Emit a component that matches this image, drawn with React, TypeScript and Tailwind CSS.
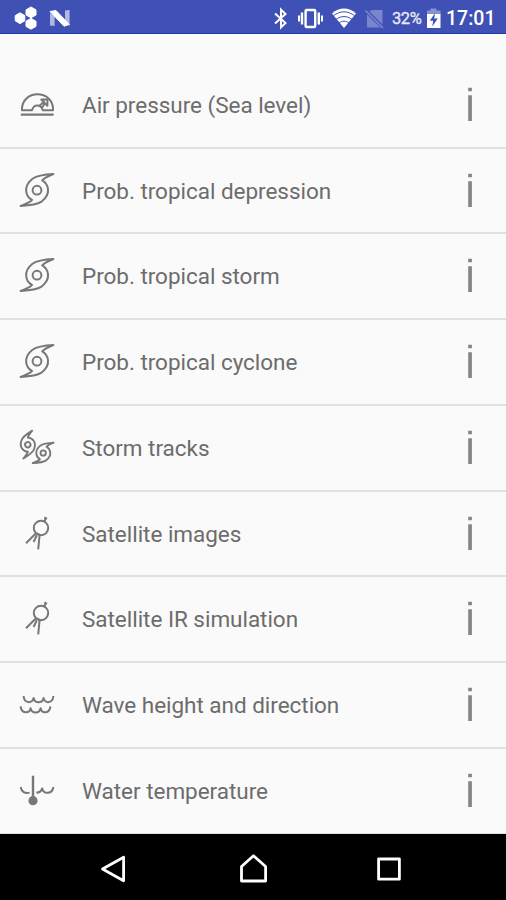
import React from 'react';

const CYCLONE =
  'M16.4 -16.2 C9 -15.8 1 -15.3 -4.5 -11.5 C-9 -8 -11.3 -4 -10.8 1 C-10.4 5 -8.4 8 -5 9.8 C-6 11.6 -9 12.6 -16.4 15.8 C-9 15.4 -1 15 4.5 11.5 C9 8 11.6 4 11 -1 C10.5 -5 8.6 -8 5.2 -9.8 C7 -12 11 -14 16.4 -16.2 Z';

type Kind = 'pressure' | 'cyclone' | 'tracks' | 'satellite' | 'waves' | 'water';

const drawings: Record<Kind, React.ReactNode> = {
  pressure: (
    <>
      <path d="M22 5.3 V3 C22.5 -5 29 -10.7 37.5 -10.7 S52.5 -5 53 3 V5.3 H42.8 C42 2.2 40 .4 37.2 .4 S32.8 2.2 32 5.3 Z" />
      <path d="M39.5 .8 L44 -3.2 L41.3 -5.4 H47.4 V.8 L45 -1.8 L41.5 3.2" />
      <path d="M20.8 9.6 H53.6" strokeWidth="2.2" />
    </>
  ),
  cyclone: (
    <g transform="translate(37 -.8)">
      <path d={CYCLONE} />
      <circle r="4.4" />
    </g>
  ),
  tracks: (
    <>
      <g transform="translate(27.8 -3.3) rotate(-28) scale(.64)" strokeWidth="2.9">
        <path d={CYCLONE} />
        <circle r="4.2" />
      </g>
      <g transform="translate(43.2 5) scale(.64)" strokeWidth="2.9">
        <path d={CYCLONE} />
        <circle r="4.2" />
      </g>
    </>
  ),
  satellite: (
    <>
      <circle cx="41" cy="-6" r="7.2" />
      <path d="M44.6 -12.4 L45.4 -15.4 M44.4 -16.6 L47 -15.2 M36 -.8 L26 9.3 M36.8 1.2 L33.6 8 M39.6 1 L38.2 15.4 M36 -.8 L40.5 1.2" />
    </>
  ),
  waves: (
    <>
      <path d="M23.6 -9 C24.2 -1.2 32.6 -1.2 33.6 -7 C34.8 -1.2 42.4 -1.2 43.6 -7 C44.6 -1.2 52.8 -1.2 53.4 -9" />
      <path d="M20.6 1.4 C21.2 9 29.6 9 30.6 3.2 C31.8 9 39.4 9 40.6 3.2 C41.6 9 49.8 9 50.4 1.4" />
    </>
  ),
  water: (
    <>
      <path d="M33 -15.3 V8" strokeWidth="2.4" />
      <circle cx="33" cy="9.7" r="4.6" fill="#777" stroke="none" />
      <path d="M20.6 -4 C21.4 .6 25 3 29.6 1.6 M36.4 1.8 C39.4 1.6 41.3 .4 42.2 -2.6 C43.8 3.8 52.4 3 53.4 -4" />
    </>
  ),
};

const rows: { label: string; kind: Kind }[] = [
  { label: 'Air pressure (Sea level)', kind: 'pressure' },
  { label: 'Prob. tropical depression', kind: 'cyclone' },
  { label: 'Prob. tropical storm', kind: 'cyclone' },
  { label: 'Prob. tropical cyclone', kind: 'cyclone' },
  { label: 'Storm tracks', kind: 'tracks' },
  { label: 'Satellite images', kind: 'satellite' },
  { label: 'Satellite IR simulation', kind: 'satellite' },
  { label: 'Wave height and direction', kind: 'waves' },
  { label: 'Water temperature', kind: 'water' },
];

function StatusBar() {
  return (
    <header className="flex h-[34px] shrink-0 items-center border-b border-[#2038a8] bg-[#3f51b5] text-white">
      <svg className="ml-3 h-8 w-[64px]" viewBox="12 0 64 32" fill="#fff" stroke="#fff" strokeLinejoin="round">
        <path d="M20 11.8 l4.8 2.8 v5.2 l-4.8 2.8 l-4.8 -2.8 v-5.2z" />
        <path d="M31 6 l5 2.8 v5.2 l-5 2.8 l-5 -2.8 v-5.2z" />
        <path d="M31 17.4 l5 2.8 v5.2 l-5 2.8 l-5 -2.8 v-5.2z" />
        <path d="M50 12 L54.6 15.4 V25 L50 24.6z M65 9.6 L69.6 9 V25 L65 21z" opacity=".6" stroke="none" />
        <path d="M50 10.5 L56 9.5 L69.2 23.4 L64 25.2z" />
      </svg>
      <div className="ml-auto flex items-center">
        <svg className="h-8 w-[120px]" viewBox="268 0 120 32" fill="none" stroke="#fff" strokeWidth="2">
          <path d="M274 12.5 L284.5 22 L280 26.4 V8.6 L284.5 13 L274 22.5" />
          <rect x="304.6" y="9" width="9.6" height="17" rx="1" strokeWidth="2.4" />
          <path d="M301 11.5 V23.5 M317.8 11.5 V23.5" strokeWidth="2.4" />
          <path d="M298 14.5 V20.5 M321 14.5 V20.5" />
          <path d="M331 12.4 C338 6 348 6 355 12.4 L343 27z" fill="#fff" stroke="none" />
          <path d="M332.4 14.8 C339 9.5 347 9.5 353.6 14.8 M335 18.4 C340 14.6 346 14.6 351 18.4 M338 22 C341 19.6 345 19.6 348 22" stroke="#3f51b5" strokeWidth="1" />
          <path d="M371 9 H381.5 V23.4 L368.5 10.6z M366 13.5 L379.5 26.4 H366z" fill="#7985cc" stroke="none" />
          <path d="M364.5 9.5 L382 26.8" stroke="#7985cc" strokeWidth="1.7" />
        </svg>
        <span className="ml-[3px] w-[33px] whitespace-nowrap pt-[5px] text-[16.5px] leading-8 tracking-[-0.4px] text-[#e8eaf6] [-webkit-text-stroke:0.3px_#e8eaf6]">32%</span>
        <svg className="h-8 w-[16px]" viewBox="424 0 16 32">
          <path d="M426 9.5 H429.5 V7.5 H435.5 V9.5 H439.5 V14 H426z" fill="#8792d1" />
          <path d="M426 13 H439.5 V27 H426z" fill="#fff" />
          <path d="M434 12 L428.8 19.8 H432.2 L431.3 25.4 L436.8 17.6 H433.2z" fill="#3f51b5" />
        </svg>
        <span className="ml-[5px] w-[60px] whitespace-nowrap pt-[5px] text-[19.5px] font-medium leading-8">17:01</span>
      </div>
    </header>
  );
}

function ListRow({ label, kind }: { label: string; kind: Kind }) {
  return (
    <li className="flex h-[85.75px] items-center border-b-2 border-[#e0e0e0]">
      <svg
        className="ml-[13px] h-12 w-12 shrink-0"
        viewBox="13 -24 48 48"
        fill="none"
        stroke="#777"
        strokeWidth="2"
        strokeLinejoin="round"
      >
        {drawings[kind]}
      </svg>
      <span className="ml-[21px] flex-1 whitespace-nowrap text-[22.5px] leading-8 tracking-[-0.03px] text-[#6c6c6c]">{label}</span>
      <svg className="mr-6 h-12 w-6 shrink-0" viewBox="458 -24 24 48" fill="#858585">
        <path d="M468.2 -17.3 h3.7 v3.6 h-3.7z M468.2 -9.7 h3.7 v25.7 h-3.7z" />
      </svg>
    </li>
  );
}

export default function App() {
  return (
    <div className="flex h-[900px] w-[506px] flex-col overflow-hidden bg-[#fafafa] font-['Roboto',sans-serif]">
      <StatusBar />
      <ul className="h-[800px] shrink-0 overflow-hidden pt-[28.9px]">
        {rows.map((row) => (
          <ListRow key={row.label} label={row.label} kind={row.kind} />
        ))}
      </ul>
      <nav className="min-h-0 flex-1 bg-black">
        <svg className="h-[66px] w-[506px]" viewBox="0 834 506 66" fill="none" stroke="#fff" strokeWidth="2.8" strokeLinejoin="round">
          <path d="M102.5 869 L123.6 857.2 V880.8z" />
          <path d="M241.5 881 V866.5 L253.5 855.8 L265.6 866.5 V881z" />
          <rect x="378.6" y="859" width="20.8" height="20.2" />
        </svg>
      </nav>
    </div>
  );
}
